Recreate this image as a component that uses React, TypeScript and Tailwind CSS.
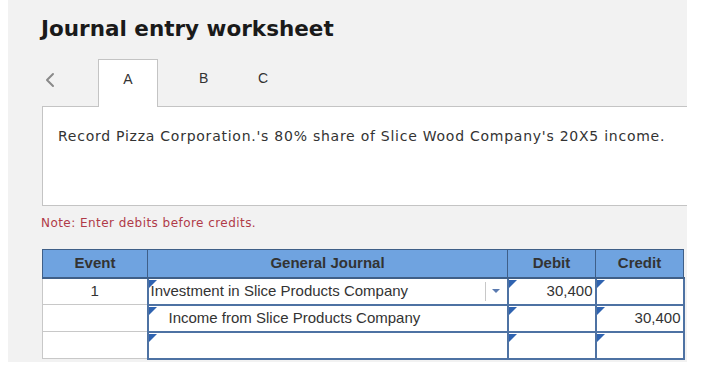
import { ChevronLeft } from "lucide-react";

const verdana = "font-['DejaVu_Sans',Verdana,sans-serif]";
const arial = "font-['Liberation_Sans',Arial,sans-serif]";

type Row = { event: string; account: string; indent?: boolean; debit: string; credit: string; dropdown?: boolean };

const rows: Row[] = [
  { event: "1", account: "Investment in Slice Products Company", debit: "30,400", credit: "", dropdown: true },
  { event: "", account: "Income from Slice Products Company", indent: true, debit: "", credit: "30,400" },
  { event: "", account: "", debit: "", credit: "" },
];

function Flag() {
  return <span className="absolute left-0 top-0 h-0 w-0 border-l-[4px] border-t-[4px] border-l-[#2f63b0] border-t-[#2f63b0] border-r-transparent border-b-transparent border-r-[4px] border-b-[4px]" />;
}

export default function App() {
  return (
    <div className="h-[377px] w-[701px] overflow-hidden bg-white">
      <div className="ml-[8px] h-[362px] w-[679px] overflow-hidden bg-[#f2f2f2]">
        <h1 className={`${verdana} pl-[33px] pt-[15px] text-[21.5px] font-bold leading-[28px] text-[#1a1a1a]`}>Journal entry worksheet</h1>

        <div className={`${arial} mt-[16px] flex h-[48px] items-start text-[14px] text-[#333]`}>
          <div className="flex w-[90px] justify-start pl-[30px] pt-[9px] text-[#8a8a8a]">
            <ChevronLeft size={24} strokeWidth={2} />
          </div>
          <div className="relative z-10 h-[48px] w-[60px] border border-b-0 border-[#c4c4c4] bg-white pt-[11px] text-center leading-[16px]">A</div>
          <div className="w-[92px] pl-[41px] pt-[11px] leading-[16px]">B</div>
          <div className="pl-[8px] pt-[11px] leading-[16px]">C</div>
        </div>

        <div className={`${verdana} ml-[34px] -mt-px h-[100px] border border-r-0 border-[#c4c4c4] bg-white pl-[15px] pt-[20px] text-[14px] leading-[18px] tracking-[0.75px] text-[#333]`}>
          Record Pizza Corporation.'s 80% share of Slice Wood Company's 20X5 income.
        </div>

        <p className={`${verdana} ml-[33px] mt-[10px] text-[12px] leading-[14px] tracking-[0.45px] text-[#b03a48]`}>Note: Enter debits before credits.</p>

        <table className={`${arial} ml-[34px] mt-[19px] w-[641px] table-fixed border-collapse text-[15px] text-[#333]`}>
          <colgroup>
            <col className="w-[105px]" />
            <col className="w-[360px]" />
            <col className="w-[88px]" />
            <col className="w-[88px]" />
          </colgroup>
          <thead>
            <tr className="h-[28px] bg-[#6fa3e0] font-bold">
              <th className="border border-[#3f5f88] border-b-2">Event</th>
              <th className="border border-[#3f5f88] border-b-2">General Journal</th>
              <th className="border border-[#3f5f88] border-b-2">Debit</th>
              <th className="border border-[#3f5f88] border-b-2">Credit</th>
            </tr>
          </thead>
          <tbody>
            {rows.map((row, i) => (
              <tr key={i} className="h-[27px] bg-white">
                <td className="border border-[#c8c8c8] text-center">{row.event}</td>
                <td className="border-2 border-[#4e72a3] p-0">
                  <div className="relative flex h-[23px] items-center">
                    <Flag />
                    <span className={`flex-1 truncate ${row.indent ? "pl-[20px]" : "pl-[2px]"}`}>{row.account}</span>
                    {row.dropdown && (
                      <span className="flex h-[19px] w-[22px] items-center justify-center border-l border-[#c8c8c8]">
                        <span className="h-0 w-0 border-x-[4px] border-t-[4px] border-x-transparent border-t-[#5a7ab0]" />
                      </span>
                    )}
                  </div>
                </td>
                <td className="border-2 border-[#4e72a3] p-0">
                  <div className="relative flex h-[23px] items-center justify-end pr-[2px]">
                    <Flag />
                    {row.debit}
                  </div>
                </td>
                <td className="border-2 border-[#4e72a3] p-0">
                  <div className="relative flex h-[23px] items-center justify-end pr-[2px]">
                    <Flag />
                    {row.credit}
                  </div>
                </td>
              </tr>
            ))}
          </tbody>
        </table>
      </div>
    </div>
  );
}
